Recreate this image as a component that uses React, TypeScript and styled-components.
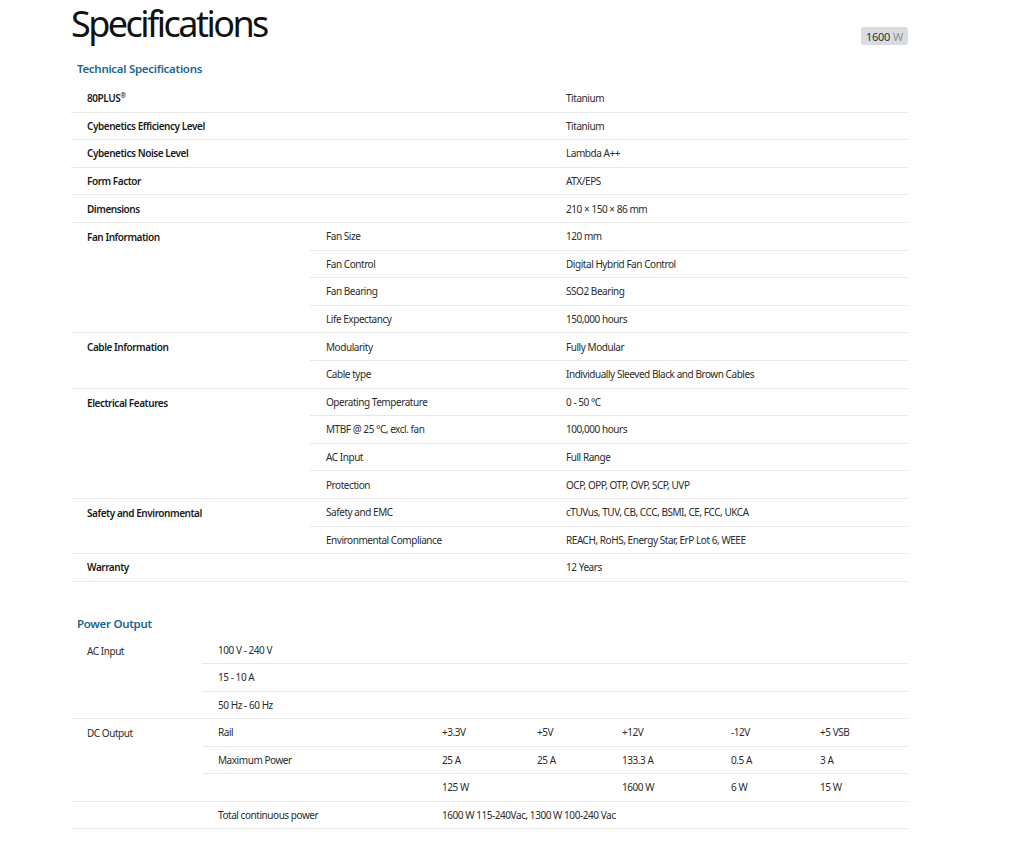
import styled, { createGlobalStyle } from "styled-components";

const GlobalStyle = createGlobalStyle`
  body {
    margin: 0;
    background: #ffffff;
    font-family: "Noto Sans", "Open Sans", sans-serif;
    color: #222222;
  }
`;

const Page = styled.div`
  width: 837px;
  margin-left: 71px;
`;

const Header = styled.div`
  display: flex;
  justify-content: space-between;
  align-items: flex-end;
  padding-top: 2px;
`;

const Title = styled.h1`
  margin: 0;
  font-size: 36px;
  font-weight: 400;
  line-height: 44px;
  letter-spacing: -2.55px;
  color: #111111;
`;

const Badge = styled.span`
  display: inline-flex;
  align-items: center;
  height: 18px;
  padding: 0 5px;
  margin-bottom: 1px;
  border-radius: 3px;
  background: #d9dce1;
  font-size: 11px;
  letter-spacing: -0.3px;
  color: #333333;

  em {
    font-style: normal;
    color: #8a9099;
    margin-left: 3px;
  }
`;

const SectionTitle = styled.h2<{ $top: number; $bottom: number }>`
  margin: ${(p) => p.$top}px 0 ${(p) => p.$bottom}px 6px;
  font-size: 11.5px;
  font-weight: 600;
  line-height: 22px;
  letter-spacing: -0.3px;
  color: #1d6690;
`;

const Table = styled.table<{ $row: number }>`
  width: 837px;
  border-collapse: collapse;
  table-layout: fixed;
  font-size: 10px;
  line-height: 14px;
  letter-spacing: -0.45px;

  td {
    height: ${(p) => p.$row}px;
  }
`;

const Cell = styled.td<{ $bold?: boolean }>`
  padding: 0 16px;
  border-bottom: 1px solid #e8e8e8;
  vertical-align: middle;
  white-space: nowrap;
  font-weight: ${(p) => (p.$bold ? 600 : 400)};
  color: ${(p) => (p.$bold ? "#1a1a1a" : "#2b2b2b")};

  sup {
    font-size: 7px;
    line-height: 0;
  }
`;

const GroupLabel = styled(Cell)`
  vertical-align: top;
  padding-top: 7px;
`;

type Spec = { label: React.ReactNode; rows: [string, string][] };

const specs: Spec[] = [
  { label: <>80PLUS<sup>®</sup></>, rows: [["", "Titanium"]] },
  { label: "Cybenetics Efficiency Level", rows: [["", "Titanium"]] },
  { label: "Cybenetics Noise Level", rows: [["", "Lambda A++"]] },
  { label: "Form Factor", rows: [["", "ATX/EPS"]] },
  { label: "Dimensions", rows: [["", "210 × 150 × 86 mm"]] },
  {
    label: "Fan Information",
    rows: [
      ["Fan Size", "120 mm"],
      ["Fan Control", "Digital Hybrid Fan Control"],
      ["Fan Bearing", "SSO2 Bearing"],
      ["Life Expectancy", "150,000 hours"],
    ],
  },
  {
    label: "Cable Information",
    rows: [
      ["Modularity", "Fully Modular"],
      ["Cable type", "Individually Sleeved Black and Brown Cables"],
    ],
  },
  {
    label: "Electrical Features",
    rows: [
      ["Operating Temperature", "0 - 50 °C"],
      ["MTBF @ 25 °C, excl. fan", "100,000 hours"],
      ["AC Input", "Full Range"],
      ["Protection", "OCP, OPP, OTP, OVP, SCP, UVP"],
    ],
  },
  {
    label: "Safety and Environmental",
    rows: [
      ["Safety and EMC", "cTUVus, TUV, CB, CCC, BSMI, CE, FCC, UKCA"],
      ["Environmental Compliance", "REACH, RoHS, Energy Star, ErP Lot 6, WEEE"],
    ],
  },
  { label: "Warranty", rows: [["", "12 Years"]] },
];

const rails = ["+3.3V", "+5V", "+12V", "-12V", "+5 VSB"];
const amps = ["25 A", "25 A", "133.3 A", "0.5 A", "3 A"];
const watts = ["125 W", "", "1600 W", "6 W", "15 W"];

function SpecTable() {
  return (
    <Table $row={26.6}>
      <colgroup>
        <col style={{ width: 239 }} />
        <col style={{ width: 240 }} />
        <col style={{ width: 358 }} />
      </colgroup>
      <tbody>
        {specs.map((s, i) =>
          s.rows.map((r, j) => (
            <tr key={`${i}-${j}`}>
              {j === 0 &&
                (s.rows.length > 1 ? (
                  <GroupLabel $bold rowSpan={s.rows.length}>
                    {s.label}
                  </GroupLabel>
                ) : (
                  <Cell $bold>{s.label}</Cell>
                ))}
              <Cell>{r[0]}</Cell>
              <Cell>{r[1]}</Cell>
            </tr>
          ))
        )}
      </tbody>
    </Table>
  );
}

function PowerTable() {
  return (
    <Table $row={26.5}>
      <colgroup>
        <col style={{ width: 131 }} />
        <col style={{ width: 224 }} />
        <col style={{ width: 95 }} />
        <col style={{ width: 85 }} />
        <col style={{ width: 109 }} />
        <col style={{ width: 89 }} />
        <col style={{ width: 104 }} />
      </colgroup>
      <tbody>
        <tr>
          <GroupLabel rowSpan={3}>AC Input</GroupLabel>
          <Cell colSpan={6}>100 V - 240 V</Cell>
        </tr>
        <tr>
          <Cell colSpan={6}>15 - 10 A</Cell>
        </tr>
        <tr>
          <Cell colSpan={6}>50 Hz - 60 Hz</Cell>
        </tr>
        <tr>
          <GroupLabel rowSpan={3}>DC Output</GroupLabel>
          <Cell>Rail</Cell>
          {rails.map((v) => (
            <Cell key={v}>{v}</Cell>
          ))}
        </tr>
        <tr>
          <Cell>Maximum Power</Cell>
          {amps.map((v, i) => (
            <Cell key={i}>{v}</Cell>
          ))}
        </tr>
        <tr>
          <Cell />
          {watts.map((v, i) => (
            <Cell key={i}>{v}</Cell>
          ))}
        </tr>
        <tr>
          <Cell />
          <Cell>Total continuous power</Cell>
          <Cell colSpan={5}>1600 W 115-240Vac, 1300 W 100-240 Vac</Cell>
        </tr>
      </tbody>
    </Table>
  );
}

export default function App() {
  return (
    <>
      <GlobalStyle />
      <Page>
        <Header>
          <Title>Specifications</Title>
          <Badge>
            1600<em>W</em>
          </Badge>
        </Header>
        <SectionTitle $top={12} $bottom={5}>
          Technical Specifications
        </SectionTitle>
        <SpecTable />
        <SectionTitle $top={31} $bottom={2}>
          Power Output
        </SectionTitle>
        <PowerTable />
      </Page>
    </>
  );
}
